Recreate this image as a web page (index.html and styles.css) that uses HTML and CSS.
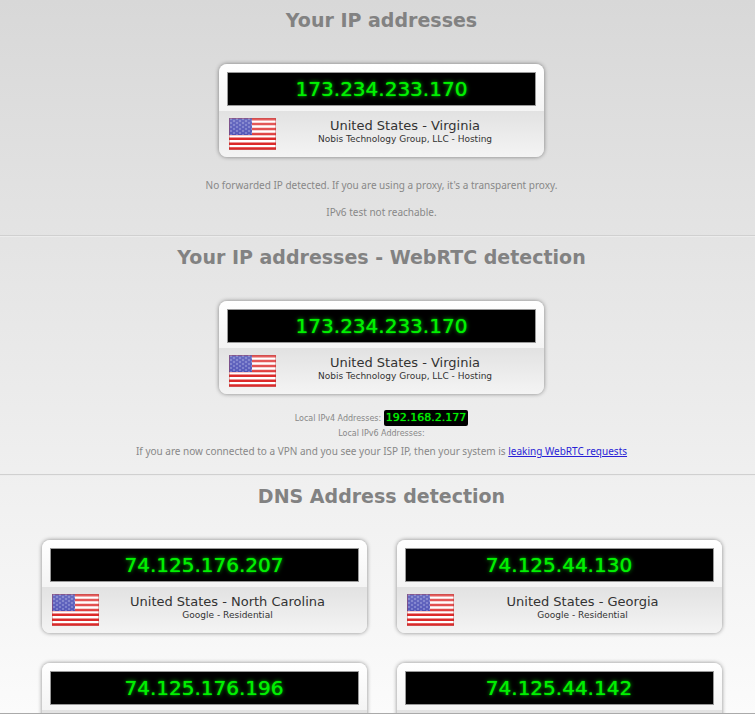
FILE: index.html
```html
<!DOCTYPE html>
<html lang="en">
<head>
    <meta charset="UTF-8">
    <meta name="viewport" content="width=device-width, initial-scale=1.0">
    <title>Your IP addresses</title>
    <link rel="stylesheet" href="styles.css">
</head>
<body>

<!-- Flag shared by every card -->
<svg class="sprite" aria-hidden="true">
    <defs>
        <pattern id="stars" width="6" height="4" patternUnits="userSpaceOnUse">
            <circle cx="2" cy="1" r="0.7" fill="#b4b6e8"/>
            <circle cx="5" cy="3" r="0.7" fill="#b4b6e8"/>
        </pattern>
        <linearGradient id="shine" x1="0" y1="0" x2="0" y2="1">
            <stop offset="0" stop-color="#fff" stop-opacity="0.25"/>
            <stop offset="0.5" stop-color="#fff" stop-opacity="0.15"/>
            <stop offset="0.55" stop-color="#fff" stop-opacity="0"/>
        </linearGradient>
    </defs>
    <symbol id="flag-us" viewBox="0 0 47 32">
        <rect width="47" height="32" fill="#fff"/>
        <path d="M0 1.2h47M0 6.1h47M0 11h47M0 15.9h47M0 20.8h47M0 25.7h47M0 30.6h47" stroke="#dc2a2a" stroke-width="2.5"/>
        <rect width="23" height="17" fill="#3a3eae"/>
        <rect width="23" height="17" fill="url(#stars)"/>
        <rect width="47" height="32" fill="url(#shine)"/>
        <rect x="0.5" y="0.5" width="46" height="31" fill="none" stroke="#b03030" stroke-opacity="0.35"/>
    </symbol>
</svg>

<main class="page">
    <section class="section">
        <h2>Your IP addresses</h2>
        <div class="cards">
            <div class="card">
                <div class="ip">173.234.233.170</div>
                <div class="info">
                    <svg class="flag" role="img" aria-label="US"><use href="#flag-us"/></svg>
                    <div class="place">
                        <div class="country">United States - Virginia</div>
                        <div class="isp">Nobis Technology Group, LLC - Hosting</div>
                    </div>
                </div>
            </div>
        </div>
        <p class="note forwarded">No forwarded IP detected. If you are using a proxy, it's a transparent proxy.</p>
        <p class="note">IPv6 test not reachable.</p>
    </section>

    <section class="section webrtc">
        <h2>Your IP addresses - WebRTC detection</h2>
        <div class="cards">
            <div class="card">
                <div class="ip">173.234.233.170</div>
                <div class="info">
                    <svg class="flag" role="img" aria-label="US"><use href="#flag-us"/></svg>
                    <div class="place">
                        <div class="country">United States - Virginia</div>
                        <div class="isp">Nobis Technology Group, LLC - Hosting</div>
                    </div>
                </div>
            </div>
        </div>
        <div class="local">Local IPv4 Addresses: <span class="local-ip">192.168.2.177</span></div>
        <div class="local">Local IPv6 Addresses:</div>
        <p class="note leak">If you are now connected to a VPN and you see your ISP IP, then your system is <a href="#">leaking WebRTC requests</a></p>
    </section>

    <section class="section">
        <h2>DNS Address detection</h2>
        <div class="cards">
            <div class="card">
                <div class="ip">74.125.176.207</div>
                <div class="info">
                    <svg class="flag" role="img" aria-label="US"><use href="#flag-us"/></svg>
                    <div class="place">
                        <div class="country">United States - North Carolina</div>
                        <div class="isp">Google - Residential</div>
                    </div>
                </div>
            </div>
            <div class="card">
                <div class="ip">74.125.44.130</div>
                <div class="info">
                    <svg class="flag" role="img" aria-label="US"><use href="#flag-us"/></svg>
                    <div class="place">
                        <div class="country">United States - Georgia</div>
                        <div class="isp">Google - Residential</div>
                    </div>
                </div>
            </div>
            <div class="card">
                <div class="ip">74.125.176.196</div>
                <div class="info"></div>
            </div>
            <div class="card">
                <div class="ip">74.125.44.142</div>
                <div class="info"></div>
            </div>
        </div>
    </section>
</main>

</body>
</html>
```
FILE: styles.css
```css
* {
    box-sizing: border-box;
}

body {
    margin: 0;
    font-family: "DejaVu Sans", Verdana, sans-serif;
    color: #888;
}

.sprite {
    position: absolute;
    width: 0;
    height: 0;
}

.page {
    height: 100vh;
    overflow: hidden;
    background: linear-gradient(#d8d8d8, #fbfbfb);
    border-bottom: 1px solid #aaa;
}

.section {
    padding: 8px 0 16px 8px;
    text-align: center;
    border-bottom: 1px solid #d0d0d0;
}

.section + .section {
    border-top: 1px solid #ececec;
}

h2 {
    margin: 0;
    font-size: 19px;
    line-height: 24px;
    color: #828282;
}

.cards {
    display: flex;
    flex-wrap: wrap;
    justify-content: center;
    gap: 30px;
    padding: 32px 0 21px;
}

.webrtc .cards {
    padding-bottom: 16px;
}

.card {
    width: 325px;
    height: 93px;
    padding: 8px;
    background: linear-gradient(#fff 0, #f4f4f4 47px, #e2e2e2 47px, #f4f4f4 100%);
    border-radius: 8px;
    box-shadow: 0 0 4px rgba(0, 0, 0, 0.45);
}

.ip {
    height: 34px;
    line-height: 32px;
    font-size: 20px;
    color: #00f000;
    background: #000;
    border: 1px solid #999;
    text-shadow: 0 0 1px #0e0, 0 0 4px #0b0;
}

.info {
    display: flex;
    padding: 12px 2px 0;
}

.flag {
    width: 47px;
    height: 32px;
}

.place {
    flex: 1;
    color: #333;
}

.country {
    font-size: 13px;
    line-height: 16px;
}

.isp {
    font-size: 9px;
    line-height: 10px;
}

.note {
    margin: 0;
    font-family: "Noto Sans", Tahoma, sans-serif;
    font-size: 10px;
    line-height: 14px;
}

.forwarded {
    margin-bottom: 13px;
}

.local {
    font-size: 8px;
    line-height: 12px;
}

.local + .local {
    margin-top: 2px;
}

.local-ip {
    display: inline-block;
    padding: 0 2px;
    font-size: 11px;
    line-height: 16px;
    color: #00f000;
    background: #000;
    border-radius: 2px;
    text-shadow: 0 0 1px #0e0;
}

.webrtc .leak {
    margin-top: 4px;
}

.leak a {
    color: #2a1fd6;
}
```
